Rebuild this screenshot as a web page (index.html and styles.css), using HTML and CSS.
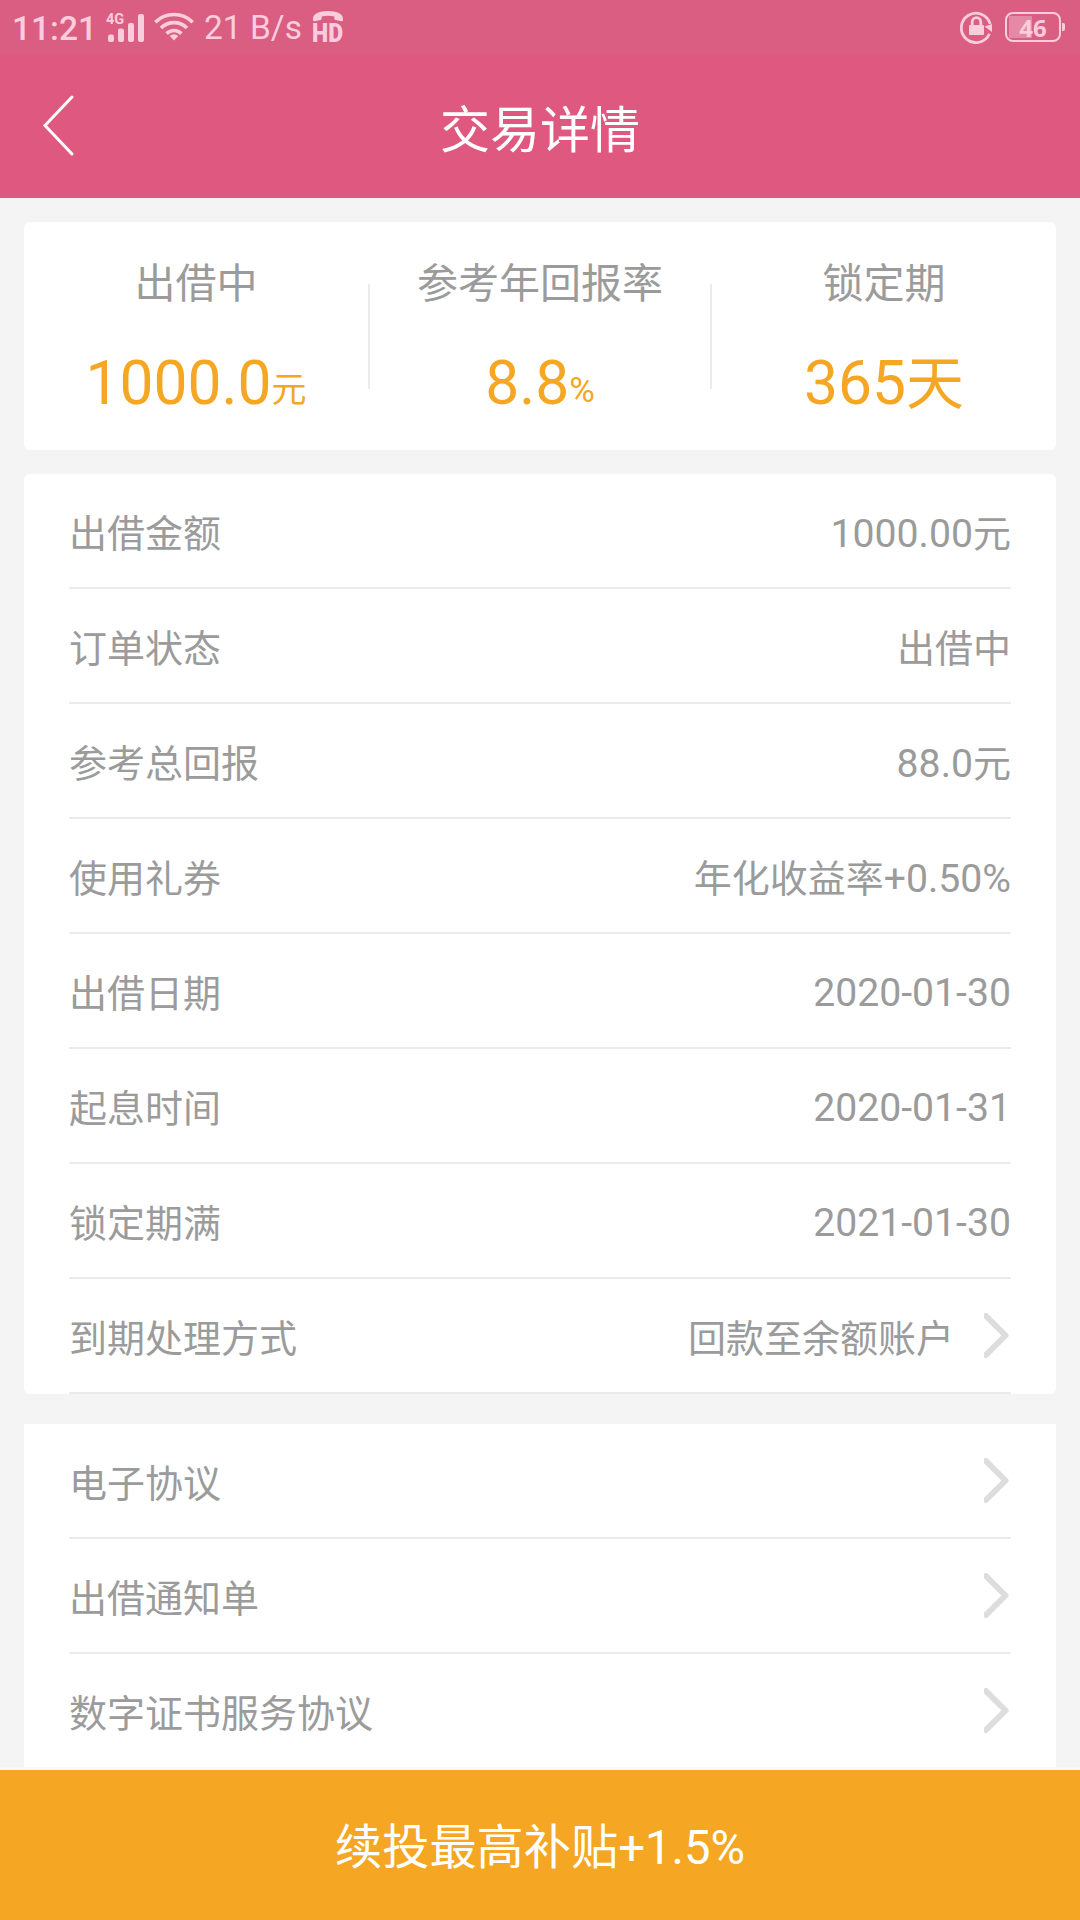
FILE: index.html
```html
<!DOCTYPE html>
<html lang="zh-CN">
<head>
<meta charset="UTF-8">
<meta name="viewport" content="width=device-width, initial-scale=1.0">
<title>交易详情</title>
<link rel="stylesheet" href="styles.css">
</head>
<body>
  <header class="header">
    <div class="status-bar">
      <span class="time">11:21</span>
      <svg class="signal" width="40" height="34" viewBox="0 -3 40 34">
        <text x="0" y="11" class="net">4G</text>
        <rect x="2" y="21.5" width="6" height="7.5" rx="2"/>
        <rect x="12" y="15.5" width="6" height="13.5" rx="2"/>
        <rect x="22" y="10" width="6" height="19" rx="2"/>
        <rect x="32" y="1" width="6" height="28" rx="2"/>
      </svg>
      <svg class="wifi" width="40" height="30" viewBox="0 0 40 30">
        <g fill="none" stroke-width="3.6">
          <path d="M1.3 10.2a26.5 26.5 0 0 1 37.4 0"/>
          <path d="M7 16a18.5 18.5 0 0 1 26 0"/>
          <path d="M12.6 21.6a10.5 10.5 0 0 1 14.8 0"/>
        </g>
        <path class="dot" d="M20 28.5l-4.3-4.6a6.5 6.5 0 0 1 8.6 0z"/>
      </svg>
      <span class="speed">21 B/s</span>
      <svg class="hd" width="34" height="46" viewBox="-1 -7 34 46">
        <path d="M1 9C0 3 7 0 16 0s16 3 15 9c0 1-1 1.500-2 1.200l-5.500-1.200c-1-.3-1.300-1-1.200-2V5.500c-4-1-8.600-1-12.600 0V7c0 1-.2 1.700-1.200 2L3 10.200C2 10.500 1 10 1 9z"/>
        <text x="0" y="31" class="hd-text" textLength="31" lengthAdjust="spacingAndGlyphs">HD</text>
      </svg>
      <svg class="lock" width="34" height="34" viewBox="0 0 34 34">
        <path class="line" d="M29.500 23.800A14.700 14.700 0 1 1 30.200 14"/>
        <path d="M24.500 16.500l7.500-2.500v8z"/>
        <rect x="9" y="15" width="15" height="10" rx="1"/>
        <path class="line" d="M12.200 16v-4a4.300 4.300 0 0 1 8.600 0v4"/>
      </svg>
      <div class="battery"><span>46</span></div>
    </div>
    <div class="nav">
      <svg class="back" width="34" height="63" viewBox="0 0 34 63">
        <path d="M31 3L4 31.500L31 60"/>
      </svg>
      <h1>交易详情</h1>
    </div>
  </header>

  <main class="content">
    <section class="summary">
      <div class="summary-item">
        <p class="label">出借中</p>
        <p class="value">1000.0<small>元</small></p>
      </div>
      <div class="summary-item">
        <p class="label">参考年回报率</p>
        <p class="value">8.8<small>%</small></p>
      </div>
      <div class="summary-item">
        <p class="label">锁定期</p>
        <p class="value">365<span class="unit">天</span></p>
      </div>
    </section>

    <ul class="list details">
      <li><span>出借金额</span><span><b>1000.00</b>元</span></li>
      <li><span>订单状态</span><span>出借中</span></li>
      <li><span>参考总回报</span><span><b>88.0</b>元</span></li>
      <li><span>使用礼券</span><span>年化收益率<b>+0.50%</b></span></li>
      <li><span>出借日期</span><span class="date"><b>2020-01-30</b></span></li>
      <li><span>起息时间</span><span class="date"><b>2020-01-31</b></span></li>
      <li><span>锁定期满</span><span class="date"><b>2021-01-30</b></span></li>
      <li>
        <span>到期处理方式</span><span>回款至余额账户</span>
        <svg class="arrow" width="26" height="46" viewBox="0 0 26 46"><path d="M2 3L21.500 22.500L2 42"/></svg>
      </li>
    </ul>

    <ul class="list links">
      <li>
        <span>电子协议</span>
        <svg class="arrow" width="26" height="46" viewBox="0 0 26 46"><path d="M2 3L21.500 22.500L2 42"/></svg>
      </li>
      <li>
        <span>出借通知单</span>
        <svg class="arrow" width="26" height="46" viewBox="0 0 26 46"><path d="M2 3L21.500 22.500L2 42"/></svg>
      </li>
      <li>
        <span>数字证书服务协议</span>
        <svg class="arrow" width="26" height="46" viewBox="0 0 26 46"><path d="M2 3L21.500 22.500L2 42"/></svg>
      </li>
    </ul>
  </main>

  <button class="renew">续投最高补贴+1.5%</button>
</body>
</html>
```
FILE: styles.css
```css
* {
  box-sizing: border-box;
  margin: 0;
  padding: 0;
}

body {
  display: flex;
  flex-direction: column;
  height: 1920px;
  overflow: hidden;
  background-color: #f4f4f4;
  color: #9b9b9b;
  font-family: Roboto, "Noto Sans CJK SC", sans-serif;
}

/* Header */
.header {
  height: 198px;
  background-color: #df5880;
  color: #fff;
}

.status-bar {
  display: flex;
  align-items: center;
  height: 54px;
  padding: 0 15px 0 12px;
  background-color: #da5d82;
  color: #f9cddc;
  fill: #f9cddc;
  stroke: none;
}

.time {
  width: 94px;
  padding-top: 2px;
  font-size: 33.5px;
  font-weight: 500;
}

.net {
  font-size: 14.5px;
  font-weight: 700;
}

.wifi {
  margin-left: 8px;
}

.wifi g {
  stroke: #f9cddc;
}

.speed {
  width: 107px;
  margin-left: 10px;
  font-size: 33.5px;
  white-space: nowrap;
}

.hd-text {
  font-size: 26px;
  font-weight: 900;
}

.lock {
  margin-left: auto;
}

.lock .line {
  fill: none;
  stroke: #f9cddc;
  stroke-width: 2.8;
}

.battery {
  position: relative;
  width: 56px;
  height: 30px;
  margin: 0 4px 0 11px;
  border: 2px solid #f9cddc;
  border-radius: 8px;
  background: linear-gradient(#e58aa6, #e58aa6) 2px 2px / 23px 22px no-repeat;
  font-family: "Noto Sans", sans-serif;
  font-size: 24px;
  font-weight: 700;
  line-height: 27px;
  text-align: center;
}

.battery::after {
  content: "";
  position: absolute;
  top: 9px;
  right: -6px;
  width: 3px;
  height: 8px;
  border-radius: 0 2px 2px 0;
  background-color: #f9cddc;
}

.nav {
  display: flex;
  align-items: center;
  height: 144px;
  padding: 0 40px 0 41px;
}

.back {
  margin-bottom: 1px;
  fill: none;
  stroke: #fff;
  stroke-width: 3;
  stroke-linecap: round;
}

.nav h1 {
  flex: 1;
  margin: -1px 35px 0 0;
  font-size: 50px;
  font-weight: 400;
  text-align: center;
}

/* Cards */
.content {
  flex: 1;
  min-height: 0;
  padding: 24px 24px 0;
  overflow: hidden;
}

.summary {
  display: grid;
  grid-template-columns: 344px 342px 346px;
  align-items: center;
  height: 228px;
  border-radius: 6px;
  background-color: #fff;
}

.summary-item {
  height: 105px;
  text-align: center;
}

.summary-item + .summary-item {
  border-left: 2px solid #ebebeb;
}

.label {
  margin-top: -30px;
  font-size: 41px;
  line-height: 60px;
}

.value {
  margin-top: 30px;
  color: #f5a623;
  font-size: 60.5px;
  line-height: 80px;
}

.value small {
  font-size: 35px;
  line-height: 1;
  vertical-align: 2px;
}

.value .unit {
  font-size: 58px;
  line-height: 1;
}

.list {
  padding: 0 45px;
  background-color: #fff;
  list-style: none;
}

.details {
  margin-top: 24px;
  border-radius: 6px;
}

.links {
  margin-top: 30px;
}

.list li {
  display: flex;
  align-items: center;
  justify-content: space-between;
  height: 115px;
  border-bottom: 2px solid #ebebeb;
  font-size: 38px;
}

.list span {
  padding-bottom: 1px;
}

.list span + span {
  margin-left: auto;
}

.list b {
  font-size: 39.2px;
  font-weight: 400;
}

.list .date {
  padding: 4px 0 0;
}

.arrow {
  margin: 1px 1px 0 30px;
  fill: none;
  stroke: #ddd;
  stroke-width: 6;
  stroke-linecap: round;
  stroke-linejoin: round;
}

/* Bottom button */
.renew {
  height: 153px;
  padding-bottom: 4px;
  border: none;
  border-top: 3px solid #f8f8f8;
  background-color: #f5a623;
  color: #fff;
  font-family: inherit;
  font-size: 47.2px;
}
```
